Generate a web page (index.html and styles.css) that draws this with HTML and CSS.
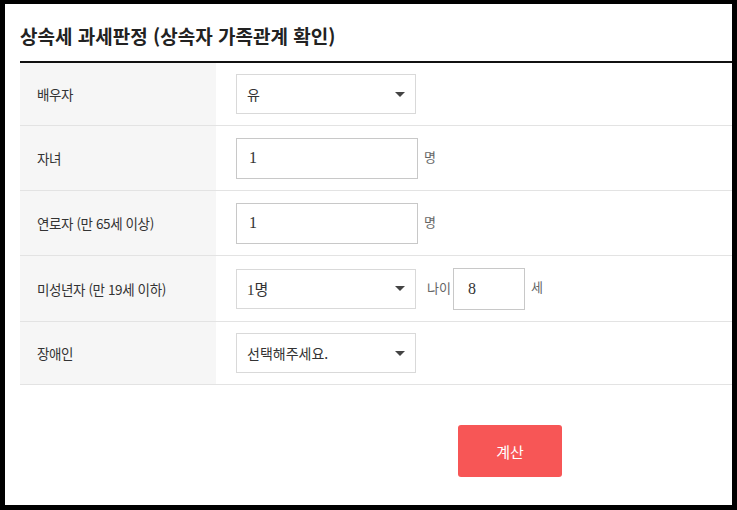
FILE: index.html
```html
<!DOCTYPE html>
<html lang="ko">
<head>
<meta charset="utf-8">
<link rel="stylesheet" href="styles.css">
</head>
<body>
<div class="frame">
  <h1 class="title">상속세 과세판정 (상속자 가족관계 확인)</h1>
  <div class="table">
    <div class="row short">
      <div class="label">배우자</div>
      <div class="field">
        <div class="select"><span>유</span><i class="arrow"></i></div>
      </div>
    </div>
    <div class="row">
      <div class="label">자녀</div>
      <div class="field">
        <div class="input">1</div><span class="unit">명</span>
      </div>
    </div>
    <div class="row">
      <div class="label">연로자 (만 65세 이상)</div>
      <div class="field">
        <div class="input">1</div><span class="unit">명</span>
      </div>
    </div>
    <div class="row tall">
      <div class="label">미성년자 (만 19세 이하)</div>
      <div class="field">
        <div class="select"><span class="num">1명</span><i class="arrow"></i></div>
        <span class="unit age-label">나이</span>
        <div class="input age">8</div>
        <span class="unit">세</span>
      </div>
    </div>
    <div class="row short">
      <div class="label">장애인</div>
      <div class="field">
        <div class="select"><span>선택해주세요.</span><i class="arrow"></i></div>
      </div>
    </div>
  </div>
  <div class="actions">
    <button class="btn">계산</button>
  </div>
</div>
</body>
</html>
```

FILE: styles.css
```css
html, body {
  margin: 0;
  padding: 0;
}
body {
  background: #000;
  padding: 4px 5px 5px 5px;
  font-family: "Noto Sans CJK KR", "Noto Sans", sans-serif;
  color: #333;
}
.frame {
  background: #fff;
  height: 501px;
  padding-left: 15px;
  box-sizing: border-box;
}
.title {
  margin: 0;
  height: 59px;
  box-sizing: border-box;
  padding-top: 19px;
  font-size: 19px;
  font-weight: bold;
  color: #222;
  line-height: 26px;
  border-bottom: 2px solid #111;
}
.table {
  display: flex;
  flex-direction: column;
}
.row {
  display: flex;
  border-bottom: 1px solid #e3e3e3;
}
.label {
  width: 196px;
  flex: none;
  background: #f6f6f6;
  padding-left: 17px;
  box-sizing: border-box;
  display: flex;
  align-items: center;
  font-size: 13.5px;
  color: #333;
  letter-spacing: -0.4px;
}
.field {
  display: flex;
  align-items: center;
  padding: 11px 0 11px 20px;
  min-height: 42px;
}
.row.tall .field {
  min-height: 43px;
}
.row.short .field {
  min-height: 40px;
}
.select {
  width: 180px;
  height: 40px;
  box-sizing: border-box;
  border: 1px solid #d9d9d9;
  display: flex;
  align-items: center;
  justify-content: space-between;
  padding: 0 10px 0 10px;
  font-size: 14px;
  color: #333;
}
.select .num {
  font-family: "Liberation Serif", "Noto Sans CJK KR", serif;
  font-size: 15px;
}
.arrow {
  width: 0;
  height: 0;
  border-left: 5px solid transparent;
  border-right: 5px solid transparent;
  border-top: 5px solid #444;
}
.input {
  width: 182px;
  height: 41px;
  box-sizing: border-box;
  border: 1px solid #c8c8c8;
  display: flex;
  align-items: center;
  padding-left: 12px;
  font-family: "Liberation Serif", serif;
  font-size: 16px;
  color: #333;
}
.input.age {
  width: 72px;
  height: 42px;
  padding-left: 14px;
}
.unit {
  font-size: 13px;
  color: #666;
  margin-left: 5px;
  margin-bottom: 4px;
}
.age-label {
  margin-left: 11px;
  margin-right: 2px;
  margin-bottom: 2px;
}
.field .unit:last-child {
  margin-left: 6px;
}
.actions {
  padding-top: 40px;
  padding-left: 438px;
}
.btn {
  width: 104px;
  height: 52px;
  border: none;
  border-radius: 3px;
  background: #f75656;
  color: #fff;
  font-family: "Noto Sans CJK KR", sans-serif;
  font-size: 15px;
  padding: 0;
}
```
